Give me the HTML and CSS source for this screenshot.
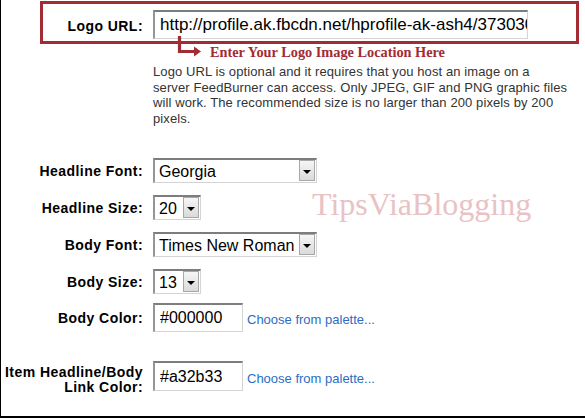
FILE: index.html
```html
<!DOCTYPE html>
<html lang="en">
<head>
    <meta charset="UTF-8">
    <meta name="viewport" content="width=device-width, initial-scale=1.0">
    <title>Feed Appearance Settings</title>
    <link rel="stylesheet" href="styles.css">
</head>
<body>

<div class="page">
    <div class="row logo-row">
        <label class="label" for="logo-url">Logo URL:</label>
        <div class="field">
            <input class="text url" id="logo-url" type="text" value="http://profile.ak.fbcdn.net/hprofile-ak-ash4/373030_100001234567_q.jpg" readonly>
            <div class="callout">
                <svg class="arrow" width="27" height="22" viewBox="0 0 27 22">
                    <path d="M4.5 0 V15.5 H20" fill="none" stroke="#a32b33" stroke-width="3.2"/>
                    <path d="M19 10.5 L26 15.5 L19 20.5 Z" fill="#a32b33"/>
                </svg>
                <span>Enter Your Logo Image Location Here</span>
            </div>
            <p class="help">Logo URL is optional and it requires that you host an image on a<br>server FeedBurner can access. Only JPEG, GIF and PNG graphic files<br>will work. The recommended size is no larger than 200 pixels by 200<br>pixels.</p>
        </div>
    </div>

    <div class="row first-select">
        <label class="label" for="headline-font">Headline Font:</label>
        <span class="select wide">
            <select id="headline-font">
                <option>Georgia</option>
                <option>Arial</option>
                <option>Verdana</option>
            </select>
            <span class="drop"></span>
        </span>
    </div>

    <div class="row">
        <label class="label" for="headline-size">Headline Size:</label>
        <span class="select small">
            <select id="headline-size">
                <option>20</option>
                <option>18</option>
                <option>16</option>
            </select>
            <span class="drop"></span>
        </span>
    </div>

    <div class="row">
        <label class="label" for="body-font">Body Font:</label>
        <span class="select wide">
            <select id="body-font">
                <option>Times New Roman</option>
                <option>Georgia</option>
                <option>Arial</option>
            </select>
            <span class="drop"></span>
        </span>
    </div>

    <div class="row">
        <label class="label" for="body-size">Body Size:</label>
        <span class="select small">
            <select id="body-size">
                <option>13</option>
                <option>12</option>
                <option>14</option>
            </select>
            <span class="drop"></span>
        </span>
    </div>

    <div class="row color-row">
        <label class="label" for="body-color">Body Color:</label>
        <input class="text color" id="body-color" type="text" value="#000000">
        <a class="palette" href="#">Choose from palette...</a>
    </div>

    <div class="row color-row link-row">
        <label class="label" for="link-color">Item Headline/Body<br>Link Color:</label>
        <input class="text color" id="link-color" type="text" value="#a32b33">
        <a class="palette" href="#">Choose from palette...</a>
    </div>

    <div class="watermark">TipsViaBlogging</div>
</div>

</body>
</html>
```

FILE: styles.css
```css
body {
    margin: 0;
    background-color: white;
    font-family: "Liberation Sans", Arial, sans-serif;
}
.page {
    position: relative;
    width: 585px;
    height: 418px;
    box-sizing: border-box;
    padding-top: 10px;
    border-left: 1px solid #000;
    border-bottom: 2px solid #000;
    overflow: hidden;
}
.row {
    display: flex;
    align-items: center;
    column-gap: 10px;
}
.label {
    flex: none;
    width: 142px;
    text-align: right;
    font-size: 14px;
    font-weight: bold;
    letter-spacing: 0.45px;
    color: #000;
}

/* first row, with the red annotation frame */
.logo-row {
    position: relative;
    align-items: flex-start;
}
.logo-row::before {
    content: "";
    position: absolute;
    left: 39px;
    top: -9px;
    width: 539px;
    height: 43px;
    box-sizing: border-box;
    border: 3px solid #a32b33;
    pointer-events: none;
}
.logo-row .label {
    line-height: 29px;
    padding-top: 2px;
}
.field {
    display: flex;
    flex-direction: column;
}
.text {
    box-sizing: border-box;
    height: 29px;
    margin: 0;
    padding: 0 0 0 5px;
    border-top: 2px solid #7d7d7d;
    border-left: 2px solid #959595;
    border-right: 1px solid #d4d4d4;
    border-bottom: 1px solid #d4d4d4;
    font-family: "Liberation Sans", Arial, sans-serif;
    font-size: 16px;
    color: #000;
    background: white;
    outline: none;
}
.url {
    width: 375px;
    font-size: 17px;
}
.callout {
    display: flex;
    align-items: flex-start;
    margin-top: 4px;
    height: 18px;
    line-height: 18px;
}
.arrow {
    flex: none;
    margin: -7px 0 0 22px;
}
.callout span {
    margin-left: 8px;
    font-family: "Liberation Serif", "Times New Roman", serif;
    font-weight: bold;
    font-size: 14.3px;
    color: #a32b33;
}
.help {
    margin: 3px 0 0;
    font-size: 13px;
    line-height: 15.5px;
    letter-spacing: 0.1px;
    color: #333;
    white-space: nowrap;
}

/* drop-down lists */
.row + .row {
    margin-top: 12px;
}
.logo-row + .first-select {
    margin-top: 32px;
}
.select {
    display: inline-flex;
    box-sizing: border-box;
    height: 25px;
    border-top: 2px solid #7d7d7d;
    border-left: 2px solid #959595;
    border-right: 1px solid #d4d4d4;
    border-bottom: 1px solid #d4d4d4;
    background: white;
}
.select.wide {
    width: 164px;
}
.select.small {
    width: 48px;
}
.select select {
    flex: 1;
    min-width: 0;
    -webkit-appearance: none;
    appearance: none;
    border: none;
    margin: 0;
    padding: 0 0 0 4px;
    background: white;
    font-family: "Liberation Sans", Arial, sans-serif;
    font-size: 16px;
    color: #000;
    outline: none;
}
.drop {
    position: relative;
    flex: none;
    width: 14px;
    margin: 0 1px 1px 0;
    border: 1px solid #a8a8a8;
    background: linear-gradient(#f6f6f6, #dadada);
}
.drop::after {
    content: "";
    position: absolute;
    left: 3px;
    top: 9px;
    border-left: 4px solid transparent;
    border-right: 4px solid transparent;
    border-top: 4px solid #000;
}

/* colour fields */
.row.color-row {
    margin-top: 9px;
}
.row.link-row {
    margin-top: 25px;
}
.color {
    width: 90px;
}
.link-row .color {
    height: 30px;
}
.link-row .label {
    align-self: flex-start;
    margin-top: 8px;
    line-height: 15px;
}
.palette {
    margin: 4px 0 0 -6px;
    font-size: 13px;
    color: #2b6dc4;
    text-decoration: none;
}

.watermark {
    position: absolute;
    left: 311px;
    top: 188px;
    font-family: "Liberation Serif", "Times New Roman", serif;
    font-size: 32px;
    line-height: 32px;
    color: #e9c2c5;
    pointer-events: none;
}
```
